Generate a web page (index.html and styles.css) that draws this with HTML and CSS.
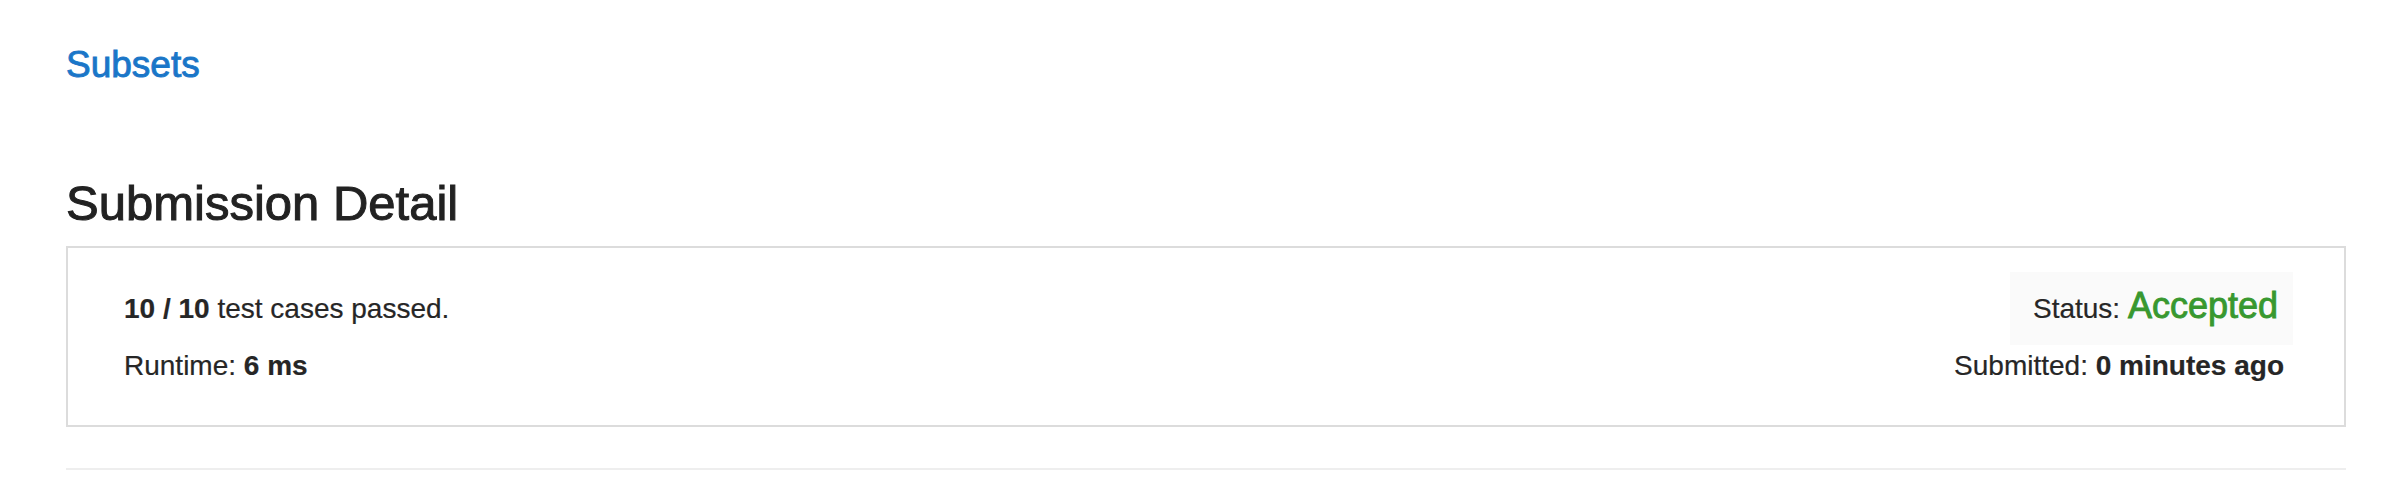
FILE: index.html
```html
<!DOCTYPE html>
<html lang="en">
<head>
<meta charset="utf-8">
<title>Submission Detail</title>
<link rel="stylesheet" href="styles.css">
</head>
<body>
<div class="page">
  <a class="problem-link" href="#">Subsets</a>
  <h3 class="page-title">Submission Detail</h3>
  <div class="detail-panel">
    <div class="detail-left">
      <div class="detail-line"><strong>10 / 10</strong> test cases passed.</div>
      <div class="detail-line detail-line-gap">Runtime: <strong>6 ms</strong></div>
    </div>
    <div class="detail-right">
      <div class="status-box">Status: <span class="status-accepted">Accepted</span></div>
      <div class="detail-line submitted">Submitted: <strong>0 minutes ago</strong></div>
    </div>
  </div>
  <div class="divider"></div>
</div>
</body>
</html>
```
FILE: styles.css
```css
html, body {
  margin: 0;
  padding: 0;
  background: #ffffff;
}

body {
  font-family: "Liberation Sans", Arial, Helvetica, sans-serif;
  color: #262626;
}

.page {
  padding: 45px 36px 0 66px;
}

.problem-link {
  display: block;
  width: max-content;
  font-size: 37px;
  line-height: 40px;
  color: #1a76c8;
  text-decoration: none;
  -webkit-text-stroke: 0.9px #1a76c8;
}

.page-title {
  margin: 92px 0 17px 0;
  font-size: 49px;
  line-height: 52px;
  font-weight: normal;
  color: #222222;
  -webkit-text-stroke: 1px #222222;
}

.detail-panel {
  display: flex;
  justify-content: space-between;
  align-items: flex-start;
  border: 2px solid #dcdcdc;
  height: 181px;
  box-sizing: border-box;
  padding: 24px 51px 0 56px;
}

.detail-left {
  margin-top: 17px;
}

.detail-line {
  font-size: 28px;
  line-height: 40px;
  white-space: nowrap;
  -webkit-text-stroke: 0.2px #262626;
}

.detail-line-gap {
  margin-top: 17px;
}

.detail-line strong {
  font-weight: bold;
}

.detail-right {
  display: flex;
  flex-direction: column;
  align-items: flex-end;
}

.status-box {
  box-sizing: border-box;
  height: 73px;
  padding: 13px 15px 0 23px;
  background: #fafafa;
  font-size: 28px;
  line-height: 41px;
  white-space: nowrap;
  -webkit-text-stroke: 0.2px #262626;
}

.status-accepted {
  font-size: 36px;
  line-height: 41px;
  color: #38982f;
  -webkit-text-stroke: 0.9px #38982f;
}

.submitted {
  margin-top: 1px;
  margin-right: 9px;
}

.divider {
  margin-top: 41px;
  height: 2px;
  background: #eeeeee;
}
```
